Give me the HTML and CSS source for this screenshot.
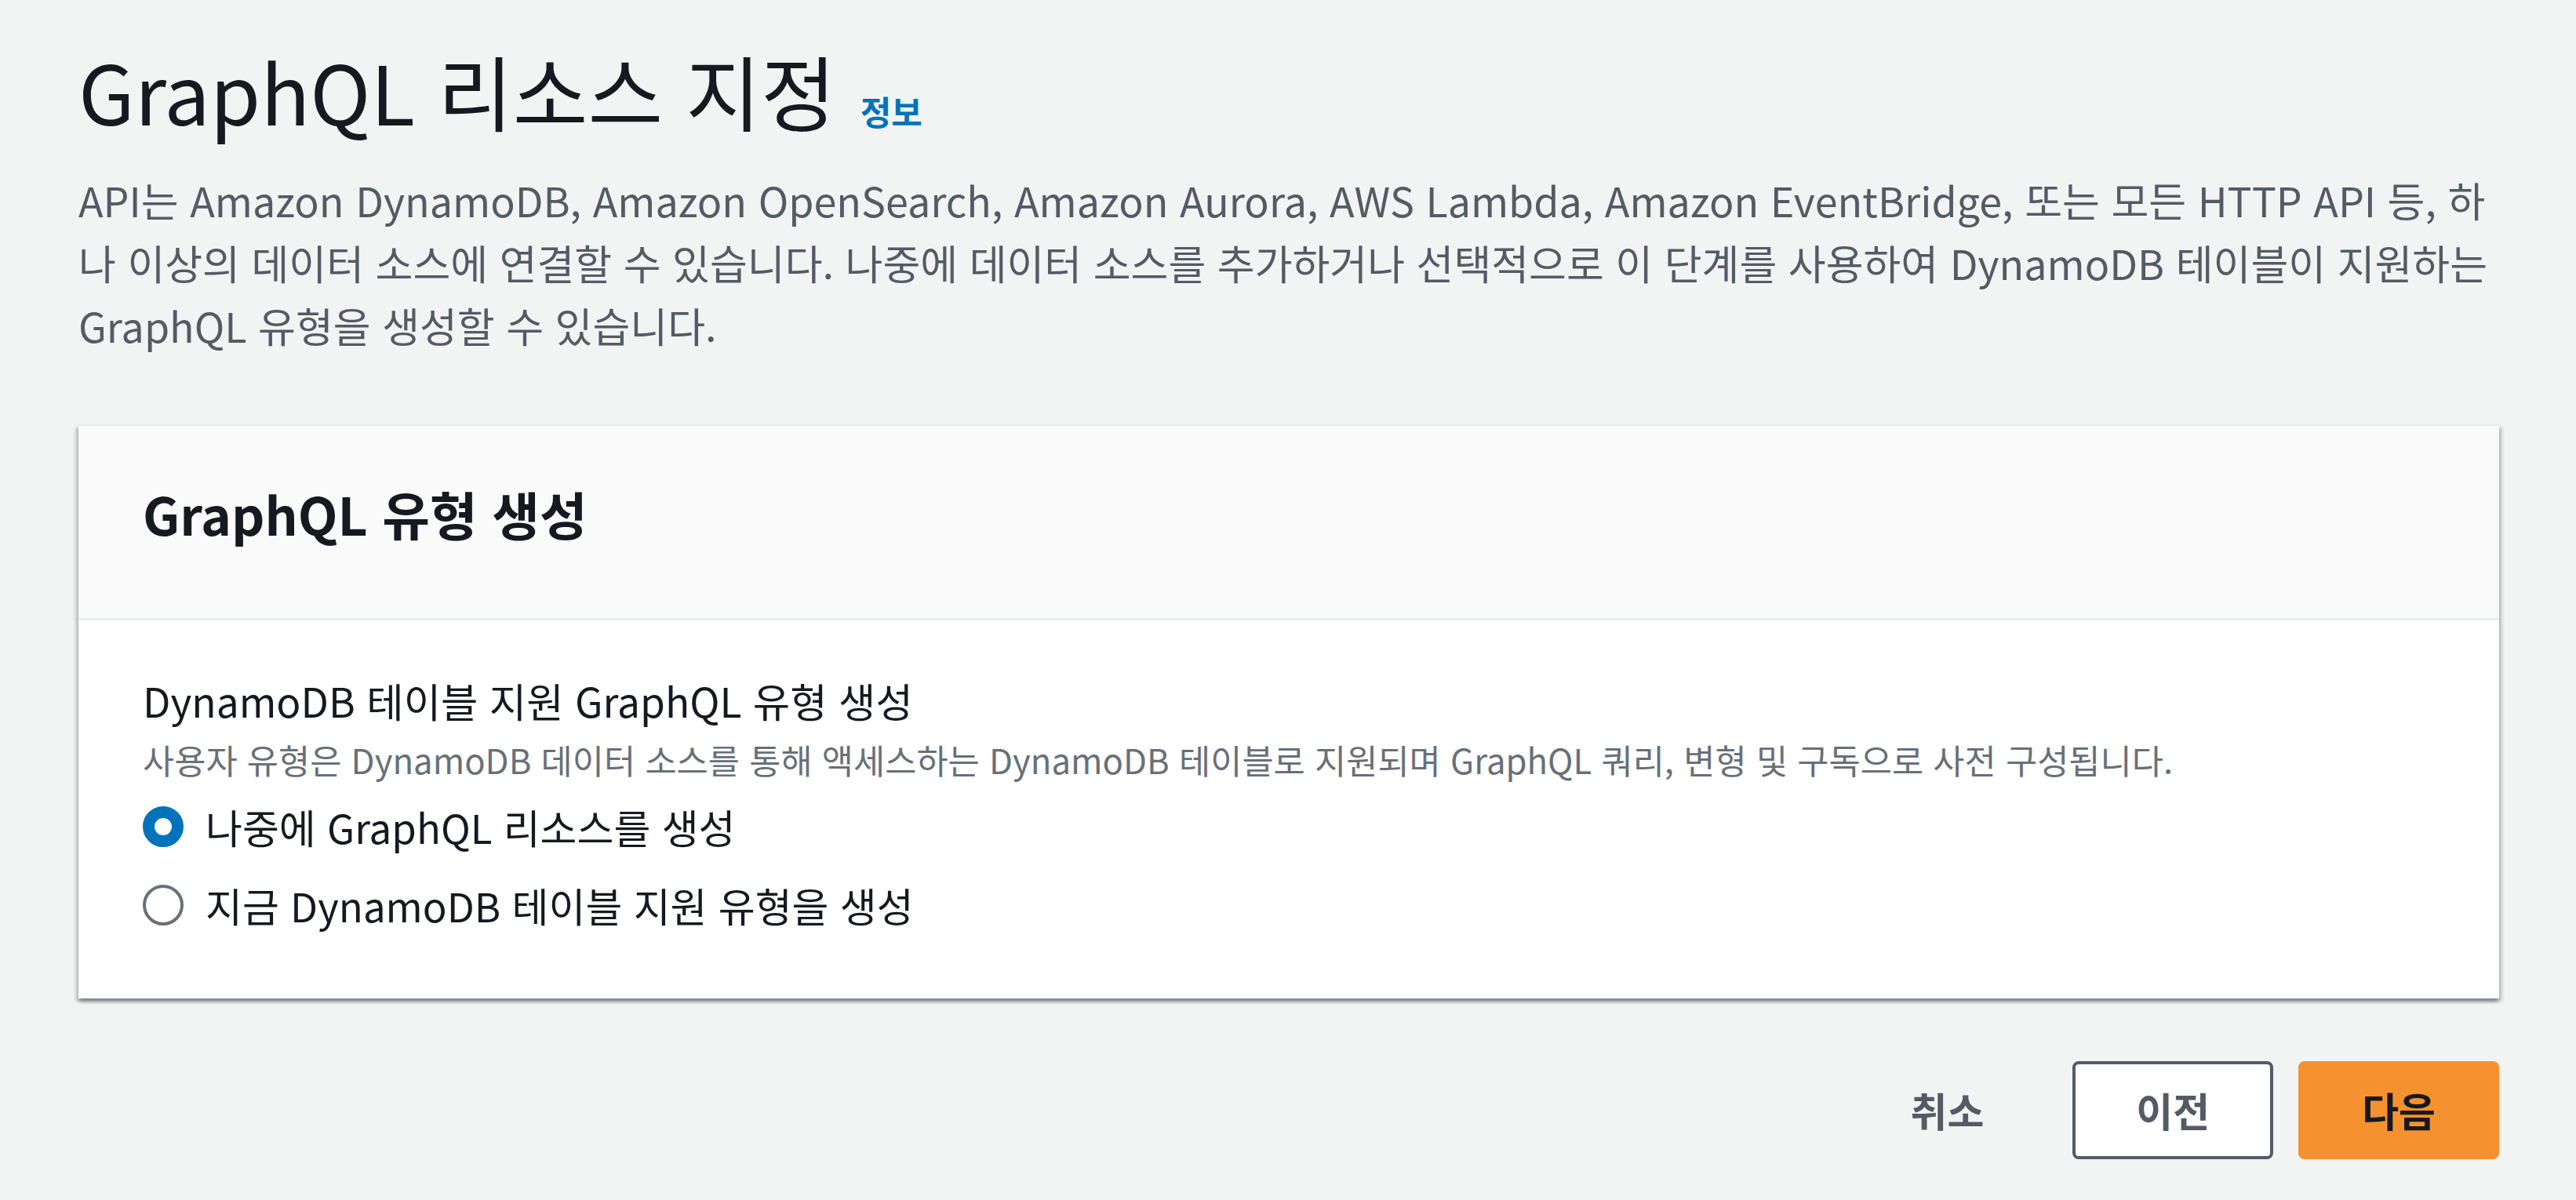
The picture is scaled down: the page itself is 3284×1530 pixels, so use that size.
FILE: index.html
```html
<!DOCTYPE html>
<html lang="ko">
<head>
    <meta charset="UTF-8">
    <meta name="viewport" content="width=device-width, initial-scale=1.0">
    <title>GraphQL 리소스 지정</title>
    <link rel="stylesheet" href="styles.css">
</head>
<body>
    <div class="page-header">
        <h1>GraphQL 리소스 지정 <a href="#" class="info-link">정보</a></h1>
        <p class="page-desc">API는 Amazon DynamoDB, Amazon OpenSearch, Amazon Aurora, AWS Lambda, Amazon EventBridge, 또는 모든 HTTP API 등, 하나 이상의 데이터 소스에 연결할 수 있습니다. 나중에 데이터 소스를 추가하거나 선택적으로 이 단계를 사용하여 DynamoDB 테이블이 지원하는 GraphQL 유형을 생성할 수 있습니다.</p>
    </div>

    <div class="container">
        <div class="container-header">
            <h2>GraphQL 유형 생성</h2>
        </div>
        <div class="container-body">
            <div class="field-label">DynamoDB 테이블 지원 GraphQL 유형 생성</div>
            <div class="field-desc">사용자 유형은 DynamoDB 데이터 소스를 통해 액세스하는 DynamoDB 테이블로 지원되며 GraphQL 쿼리, 변형 및 구독으로 사전 구성됩니다.</div>
            <div class="radio-group">
                <label class="radio-row">
                    <span class="radio checked"></span>
                    <span class="radio-label">나중에 GraphQL 리소스를 생성</span>
                </label>
                <label class="radio-row">
                    <span class="radio"></span>
                    <span class="radio-label">지금 DynamoDB 테이블 지원 유형을 생성</span>
                </label>
            </div>
        </div>
    </div>

    <div class="actions">
        <button class="btn btn-link">취소</button>
        <button class="btn btn-normal">이전</button>
        <button class="btn btn-primary">다음</button>
    </div>
</body>
</html>
```

FILE: styles.css
```css
:root {
    --page-bg: #f2f3f3;
    --text-dark: #16191f;
    --text-gray: #545b64;
    --text-light: #687078;
    --link-blue: #0073bb;
    --orange: #f5912f;
    --divider: #eaeded;
}
body {
    margin: 0;
    padding: 50px 98px 0 100px;
    background-color: var(--page-bg);
    font-family: "Noto Sans CJK KR", "Noto Sans", sans-serif;
    color: var(--text-dark);
}
h1 {
    margin: 0;
    font-size: 104px;
    font-weight: 400;
    line-height: 130px;
}
.info-link {
    margin-left: 2px;
    font-size: 43px;
    font-weight: 700;
    color: var(--link-blue);
    text-decoration: none;
}
.page-desc {
    margin: 9px 0 0;
    font-size: 52px;
    line-height: 80px;
    color: var(--text-gray);
}
.container {
    margin-top: 86px;
    background-color: #fff;
    border-top: 2px solid var(--divider);
    box-shadow: 0 4px 4px 0 rgba(0, 28, 36, 0.3), 4px 4px 4px 0 rgba(0, 28, 36, 0.15), -4px 4px 4px 0 rgba(0, 28, 36, 0.15);
}
.container-header {
    padding: 66px 82px 89px;
    background-color: #fafafa;
    border-bottom: 3px solid var(--divider);
}
.container-header h2 {
    margin: 0;
    font-size: 66px;
    font-weight: 700;
    line-height: 90px;
}
.container-body {
    padding: 62px 82px 83px;
}
.field-label {
    font-size: 51.5px;
    line-height: 80px;
}
.field-desc {
    margin-top: 6px;
    font-size: 43.7px;
    line-height: 58px;
    color: var(--text-light);
}
.radio-group {
    margin-top: 21px;
    display: flex;
    flex-direction: column;
    gap: 28px;
}
.radio-row {
    display: flex;
    align-items: center;
    gap: 28px;
    height: 72px;
    font-size: 51px;
}
.radio {
    box-sizing: border-box;
    width: 52px;
    height: 52px;
    border-radius: 50%;
    border: 4px solid var(--text-light);
    background-color: #fff;
}
.radio.checked {
    border: 15px solid var(--link-blue);
}
.actions {
    display: flex;
    justify-content: flex-end;
    gap: 32px;
    margin-top: 80px;
}
.btn {
    font-family: inherit;
    font-size: 51px;
    font-weight: 700;
    line-height: 75px;
    padding: 21px 77px;
    border: 4px solid transparent;
    border-radius: 8px;
    background: none;
    cursor: pointer;
}
.btn-link {
    color: var(--text-gray);
}
.btn-normal {
    background-color: #fff;
    border-color: var(--text-gray);
    color: var(--text-gray);
}
.btn-primary {
    background-color: var(--orange);
    border-color: var(--orange);
    color: var(--text-dark);
}
```
